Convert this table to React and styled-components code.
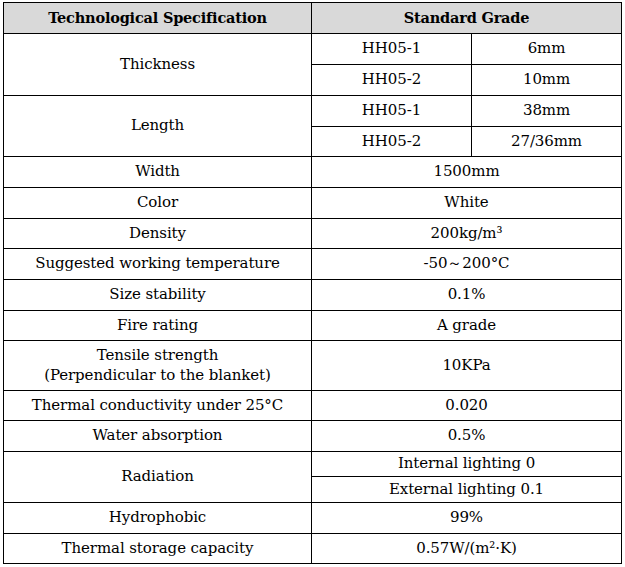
import React from "react"
import styled, { createGlobalStyle } from "styled-components"

const GlobalStyle = createGlobalStyle`
  html, body {
    margin: 0;
    padding: 0;
    background: #fff;
  }
`

const Sheet = styled.div`
  padding: 2px 0 0 3px;
`

const SpecTable = styled.table`
  border-collapse: collapse;
  table-layout: fixed;
  width: 618px;
  font-family: "DejaVu Serif", "Liberation Serif", serif;
  font-size: 15px;
  letter-spacing: -0.1px;
  color: #000;
  border: 1px solid #000;
`

const Row = styled.tr`
  height: ${(p) => p.h}px;
`

const HeadCell = styled.th`
  background: #d9d9d9;
  border: 1px solid #000;
  font-size: 14.5px;
  font-weight: bold;
  letter-spacing: -0.2px;
  text-align: center;
  vertical-align: middle;
  padding: 0;
  line-height: 1.2;
`

const Cell = styled.td`
  border: 1px solid #000;
  text-align: center;
  vertical-align: middle;
  padding: 0;
  line-height: 1.3;
`

const specs = [
  { name: "Thickness", sub: [["HH05-1", "6mm"], ["HH05-2", "10mm"]], h: [31, 31] },
  { name: "Length", sub: [["HH05-1", "38mm"], ["HH05-2", "27/36mm"]], h: [31, 30] },
  { name: "Width", value: "1500mm", h: 31 },
  { name: "Color", value: "White", h: 31 },
  { name: "Density", value: <>200kg/m³</>, h: 30 },
  { name: "Suggested working temperature", value: "-50～200°C", h: 31 },
  { name: "Size stability", value: "0.1%", h: 31 },
  { name: "Fire rating", value: "A grade", h: 30 },
  {
    name: (
      <>
        Tensile strength
        <br />
        (Perpendicular to the blanket)
      </>
    ),
    value: "10KPa",
    h: 50,
  },
  { name: "Thermal conductivity under 25°C", value: "0.020", h: 30 },
  { name: "Water absorption", value: "0.5%", h: 31 },
  { name: "Radiation", lines: ["Internal lighting 0", "External lighting 0.1"], h: [25, 26] },
  { name: "Hydrophobic", value: "99%", h: 31 },
  { name: "Thermal storage capacity", value: <>0.57W/(m²·K)</>, h: 30 },
]

function SpecRows({ spec }) {
  if (spec.sub) {
    return spec.sub.map((s, i) => (
      <Row key={i} h={spec.h[i]}>
        {i === 0 && <Cell rowSpan={2}>{spec.name}</Cell>}
        <Cell>{s[0]}</Cell>
        <Cell>{s[1]}</Cell>
      </Row>
    ))
  }
  if (spec.lines) {
    return spec.lines.map((l, i) => (
      <Row key={i} h={spec.h[i]}>
        {i === 0 && <Cell rowSpan={2}>{spec.name}</Cell>}
        <Cell colSpan={2}>{l}</Cell>
      </Row>
    ))
  }
  return (
    <Row h={spec.h}>
      <Cell>{spec.name}</Cell>
      <Cell colSpan={2}>{spec.value}</Cell>
    </Row>
  )
}

export default function App() {
  return (
    <>
      <GlobalStyle />
      <Sheet>
        <SpecTable>
          <colgroup>
            <col style={{ width: 308 }} />
            <col style={{ width: 160 }} />
            <col style={{ width: 150 }} />
          </colgroup>
          <tbody>
            <Row h={31}>
              <HeadCell>Technological Specification</HeadCell>
              <HeadCell colSpan={2}>Standard Grade</HeadCell>
            </Row>
            {specs.map((s, i) => (
              <SpecRows key={i} spec={s} />
            ))}
          </tbody>
        </SpecTable>
      </Sheet>
    </>
  )
}
